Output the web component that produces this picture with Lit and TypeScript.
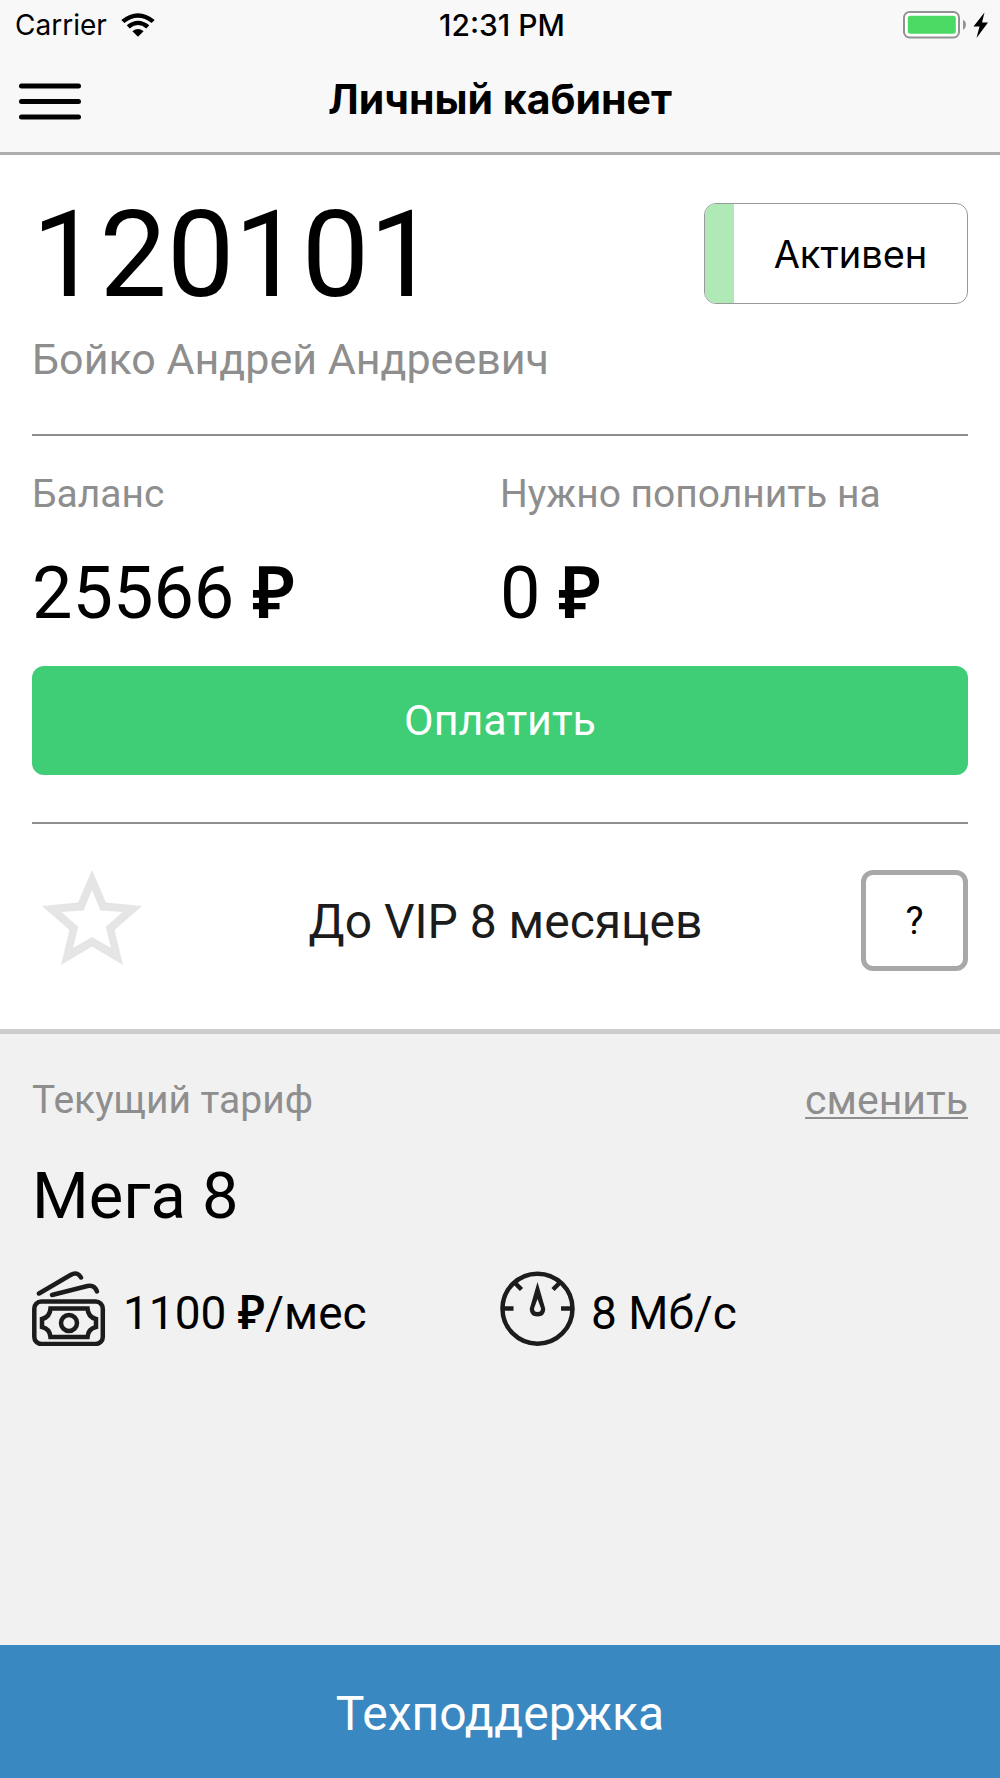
import { LitElement, html, css, svg } from "lit";
import { customElement } from "lit/decorators.js";

const wifiIcon = svg`
  <svg class="wifi" viewBox="0 0 34 24" aria-hidden="true">
    <path d="M0.3 6.9 Q17 -6.6 33.7 6.9 L30.6 10 Q17 -0.6 3.4 10 Z" />
    <path d="M5.7 12.3 Q17 3.2 28.3 12.3 L25.3 15.4 Q17 8.6 8.7 15.4 Z" />
    <path d="M11.4 18.2 Q17 13.6 22.6 18.2 L17 23.8 Z" />
  </svg>`;

const batteryIcon = svg`
  <svg class="battery" viewBox="0 0 86 28" aria-hidden="true">
    <rect x="1" y="1" width="55" height="25.5" rx="5.5" fill="#fff" stroke="#929292" stroke-width="2" />
    <rect x="4.8" y="4.8" width="48" height="18" rx="2.5" fill="#4cd964" />
    <path d="M60 8.5 Q63 10.5 63 13.8 Q63 17 60 19 Z" fill="#929292" />
    <path d="M81.5 1.5 L70.5 15.5 H76.5 L73.5 27 L85 11.5 H79 Z" fill="#000" />
  </svg>`;

const menuIcon = svg`
  <svg class="menu-icon" viewBox="0 0 62 37" aria-hidden="true">
    <path d="M2.5 3 H59.5 M2.5 18.5 H59.5 M2.5 34 H59.5"
      fill="none" stroke="#000" stroke-width="5" stroke-linecap="round" />
  </svg>`;

const starIcon = svg`
  <svg class="star" viewBox="0 0 100 95" aria-hidden="true">
    <path fill="#e5e5e5" fill-rule="evenodd"
      d="M50 0 L64 32.5 L100 36 L72.5 60 L81 95 L50 76.5 L19 95 L27.5 60 L0 36 L36 32.5 Z
         M50 20 L41.5 40.5 L19.5 42 L36.2 57 L31 78 L50 67 L69 78 L63.8 57 L80.5 42 L58.5 40.5 Z" />
  </svg>`;

const cashIcon = svg`
  <svg class="fact-icon" viewBox="0 0 75 75" aria-hidden="true" fill="none" stroke="#1c1c1c" stroke-width="4.5">
    <rect x="2.3" y="30.5" width="68.5" height="42.5" rx="7" />
    <path d="M18.5 37.5 H55.5 Q56 46 64 48 V56 Q56 58 55.5 66 H18.5 Q18 58 10 56 V48 Q18 46 18.5 37.5 Z" />
    <circle cx="37" cy="52" r="8" />
    <path d="M7 22.5 L38.5 4 Q45.5 0 49 6.5" stroke-linecap="round" />
    <path d="M20 24 L55.5 15 Q62.5 13.5 65 20.5" stroke-linecap="round" />
  </svg>`;

const gaugeIcon = svg`
  <svg class="fact-icon" viewBox="0 0 75 75" aria-hidden="true" fill="none" stroke="#1c1c1c" stroke-width="4.5">
    <circle cx="37.5" cy="37.7" r="35" />
    <path d="M2 37.4 H13.5 M61 37.4 H73 M14 11 L21.5 18.5 M60.5 11 L53 18.5" />
    <path d="M37.5 11 L45.3 38 Q45 45.5 37.5 45.5 Q30 45.5 29.7 38 Z
      M37.5 28 L34 37.5 Q34 41 37.5 41 Q41 41 41 37.5 Z"
      fill="#1c1c1c" fill-rule="evenodd" stroke="none" />
  </svg>`;

@customElement("app-root")
export class AppRoot extends LitElement {
  static styles = css`
    :host {
      display: flex;
      flex-direction: column;
      min-height: 100vh;
      background: #fff;
      color: #000;
      font-family: Roboto, "Liberation Sans", sans-serif;
    }
    * {
      box-sizing: border-box;
    }
    h1, h2, p, dl, dd, dt {
      margin: 0;
      font-weight: 400;
    }
    button {
      margin: 0;
      padding: 0;
      border: 0;
      background: none;
      color: inherit;
      font: inherit;
      cursor: pointer;
    }
    svg {
      display: block;
      flex: none;
    }
    .header {
      background: #f8f8f8;
      border-bottom: 3px solid #adadad;
      font-family: Inter, "Liberation Sans", sans-serif;
    }
    .status-bar,
    .nav {
      display: grid;
      grid-template-columns: 1fr auto 1fr;
      align-items: center;
    }
    .status-bar {
      height: 50px;
      padding: 0 11px 0 15px;
      font-size: 28px;
    }
    .carrier {
      display: flex;
      align-items: center;
      gap: 14px;
    }
    .time {
      font-size: 30px;
      font-weight: 500;
    }
    .wifi {
      width: 34px;
      height: 24px;
    }
    .battery {
      width: 86px;
      height: 28px;
      justify-self: end;
    }
    .nav {
      height: 102px;
      padding: 0 19px;
    }
    .menu {
      justify-self: start;
    }
    .menu-icon {
      width: 62px;
      height: 37px;
    }
    .title {
      padding-bottom: 4px;
      font-size: 41px;
      font-weight: 700;
    }
    .account {
      padding: 48px 32px 58px;
      border-bottom: 5px solid #ccc;
    }
    .row {
      display: flex;
      justify-content: space-between;
      align-items: flex-start;
    }
    .number {
      font-size: 120px;
      line-height: 104px;
    }
    .badge {
      display: flex;
      align-items: center;
      width: 264px;
      height: 101px;
      border: 1px solid #999;
      border-radius: 12px;
      overflow: hidden;
      font-family: Inter, "Liberation Sans", sans-serif;
      font-size: 38px;
    }
    .badge::before {
      content: "";
      width: 29px;
      align-self: stretch;
      background: #afe9b6;
    }
    .badge-text {
      flex: 1;
      text-align: center;
    }
    .name {
      margin-top: 26px;
      color: #8e8e8e;
      font-size: 43px;
      line-height: 52px;
    }
    .divider {
      height: 2px;
      margin: 0;
      border: 0;
      background: #8e8e8e;
    }
    .name + .divider {
      margin-top: 49px;
    }
    .balances {
      display: grid;
      grid-template-columns: 1fr 1fr;
      margin-top: 36px;
    }
    .label {
      color: #8e8e8e;
      font-size: 39px;
      line-height: 44px;
    }
    .amount {
      margin-top: 36px;
      font-size: 72px;
      line-height: 84px;
    }
    .ruble {
      font-family: "Noto Sans", sans-serif;
      font-weight: 600;
      line-height: 1;
    }
    .pay {
      display: block;
      width: 100%;
      height: 109px;
      margin: 30px 0 47px;
      padding-bottom: 2px;
      border-radius: 12px;
      background: #3fcd75;
      color: #fff;
      font-size: 43px;
    }
    .vip {
      display: flex;
      justify-content: space-between;
      align-items: center;
      margin-top: 46px;
      padding-left: 10px;
    }
    .star {
      width: 100px;
      height: 95px;
      margin-right: 8px;
      align-self: flex-start;
    }
    .vip-text {
      padding-top: 2px;
      color: #1c1c1c;
      font-size: 48px;
    }
    .help {
      width: 107px;
      height: 101px;
      border: 5px solid #a8a8a8;
      border-radius: 12px;
      font-size: 38px;
    }
    .tariff {
      flex: 1;
      padding: 44px 32px;
      background: #f1f1f1;
    }
    .change {
      color: #8e8e8e;
      font-size: 41px;
      line-height: 44px;
      text-decoration: underline;
      text-decoration-thickness: 2px;
      text-underline-offset: 3px;
    }
    .plan {
      margin-top: 36px;
      font-size: 65px;
      line-height: 76px;
    }
    .facts {
      display: grid;
      grid-template-columns: 1fr 1fr;
      margin-top: 37px;
      font-size: 46px;
    }
    .fact {
      display: flex;
      align-items: center;
      gap: 16px;
    }
    .fact-icon {
      width: 75px;
      height: 75px;
    }
    .fact-text {
      padding-top: 9px;
    }
    .support {
      height: 133px;
      padding-top: 3px;
      background: #3a88c1;
      color: #fff;
      font-size: 48px;
    }
  `;

  render() {
    const ruble = html`<span class="ruble">₽</span>`;
    return html`
      <header class="header">
        <div class="status-bar">
          <div class="carrier"><span>Carrier</span>${wifiIcon}</div>
          <span class="time">12:31 PM</span>
          ${batteryIcon}
        </div>
        <div class="nav">
          <button class="menu" aria-label="Меню">${menuIcon}</button>
          <h1 class="title">Личный кабинет</h1>
        </div>
      </header>
      <section class="account">
        <div class="row">
          <p class="number">120101</p>
          <div class="badge"><span class="badge-text">Активен</span></div>
        </div>
        <p class="name">Бойко Андрей Андреевич</p>
        <hr class="divider" />
        <dl class="balances">
          <div>
            <dt class="label">Баланс</dt>
            <dd class="amount">25566 ${ruble}</dd>
          </div>
          <div>
            <dt class="label">Нужно пополнить на</dt>
            <dd class="amount">0 ${ruble}</dd>
          </div>
        </dl>
        <button class="pay">Оплатить</button>
        <hr class="divider" />
        <div class="vip">
          ${starIcon}
          <p class="vip-text">До VIP 8 месяцев</p>
          <button class="help">?</button>
        </div>
      </section>
      <section class="tariff">
        <div class="row">
          <p class="label">Текущий тариф</p>
          <a class="change" href="#">сменить</a>
        </div>
        <h2 class="plan">Мега 8</h2>
        <div class="facts">
          <div class="fact">${cashIcon}<span class="fact-text">1100 ${ruble}/мес</span></div>
          <div class="fact">${gaugeIcon}<span class="fact-text">8 Мб/с</span></div>
        </div>
      </section>
      <button class="support">Техподдержка</button>
    `;
  }
}
